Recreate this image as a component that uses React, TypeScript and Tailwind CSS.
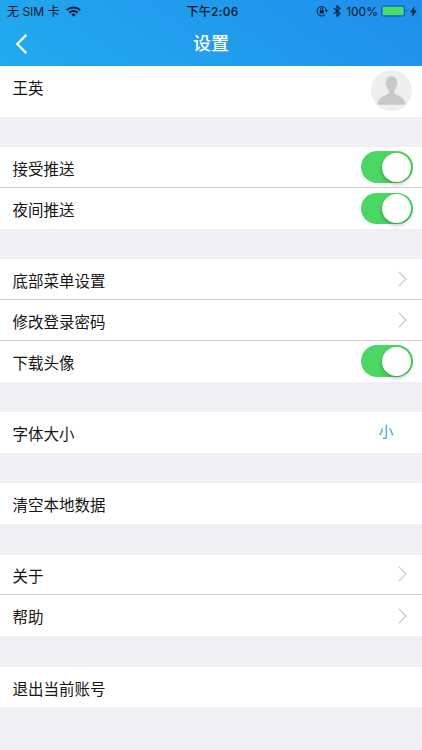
type Item = {
  label: string
  kind: "switch" | "link" | "value" | "plain"
  value?: string
}

const groups: Item[][] = [
  [
    { label: "接受推送", kind: "switch" },
    { label: "夜间推送", kind: "switch" },
  ],
  [
    { label: "底部菜单设置", kind: "link" },
    { label: "修改登录密码", kind: "link" },
    { label: "下载头像", kind: "switch" },
  ],
  [{ label: "字体大小", kind: "value", value: "小" }],
  [{ label: "清空本地数据", kind: "plain" }],
  [
    { label: "关于", kind: "link" },
    { label: "帮助", kind: "link" },
  ],
  [{ label: "退出当前账号", kind: "plain" }],
]

function StatusBar() {
  return (
    <div className="flex h-[22px] items-center justify-between pl-[7px] pr-[5px] text-[12px] leading-[22px] text-[#06182c]">
      <div className="flex w-[140px] items-center gap-[6px]">
        <span className="whitespace-nowrap pt-px">无 SIM 卡</span>
        <svg width="15" height="11" viewBox="0 0 15 11" fill="none" stroke="currentColor" strokeWidth="2">
          <path d="M0.8 4.1a9.6 9.6 0 0 1 13.4 0" />
          <path d="M3.3 6.7a6 6 0 0 1 8.4 0" />
          <path d="M7.5 10.8 5.3 8.6a3.1 3.1 0 0 1 4.4 0z" fill="currentColor" stroke="none" />
        </svg>
      </div>
      <span className="pl-[1px] pt-px font-medium tracking-[0.3px]">下午2:06</span>
      <div className="flex w-[140px] items-center justify-end">
        {/* Rotation lock */}
        <svg className="mr-[5px]" width="12" height="12" viewBox="0 0 12 12" fill="none" stroke="currentColor">
          <path d="M9.2 9.5A4.7 4.7 0 1 1 10.4 5.6" strokeWidth="1" />
          <path d="M8.7 5.3h3.3l-1.6 2.2z" fill="currentColor" stroke="none" />
          <rect x="3.7" y="5.3" width="4" height="3.2" fill="currentColor" stroke="none" />
          <path d="M4.5 5.4V4.3a1.2 1.2 0 0 1 2.4 0v1.1" strokeWidth="0.9" />
        </svg>
        {/* Bluetooth */}
        <svg className="mr-[5px]" width="8" height="12" viewBox="0 0 8 12" fill="none" stroke="currentColor" strokeWidth="1.1">
          <path d="M0.8 3.2 7 8.6 4 11.2V0.8L7 3.4 0.8 8.8" />
        </svg>
        <span className="pt-px">100%</span>
        <svg className="ml-[3px]" width="27" height="12" viewBox="0 0 27 12">
          <rect x="0.6" y="0.9" width="23" height="10.2" rx="2" fill="none" stroke="#11629f" strokeWidth="1" />
          <rect x="1.8" y="2.1" width="20.6" height="7.8" rx="0.8" fill="#4cdb63" />
          <path d="M25 4.4c1.2.5 1.2 2.7 0 3.2z" fill="#11629f" />
        </svg>
        <svg className="ml-[2px]" width="7" height="11" viewBox="0 0 7 11">
          <path d="M4.7 0 0.3 6.2h2.5L2 11l4.7-6.5H4z" fill="currentColor" />
        </svg>
      </div>
    </div>
  )
}

function Switch() {
  return (
    <div className="flex h-[31.5px] w-[52px] items-center justify-end rounded-full bg-[#4bd763] pr-[1.5px]">
      <div className="size-[29px] rounded-full bg-white shadow-[0_2px_4px_rgba(0,0,0,0.28)]" />
    </div>
  )
}

function Chevron() {
  return (
    <svg className="mr-[5.5px]" width="9" height="16" viewBox="0 0 9 16" fill="none" stroke="#c7c7cc" strokeWidth="1.2">
      <path d="M0.9 0.8 8 8 0.9 15.2" />
    </svg>
  )
}

function Row({ item, divided }: { item: Item; divided: boolean }) {
  return (
    <div
      className={`flex h-[40.75px] items-center justify-between bg-white pl-[12.5px] pr-[9.5px] ${
        divided ? "border-b border-[#d0d0d3]" : ""
      }`}
    >
      <span className="pt-[5.5px]">{item.label}</span>
      {item.kind === "switch" && <Switch />}
      {item.kind === "link" && <Chevron />}
      {item.kind === "value" && <span className="mr-[19px] text-[15px] text-[#35a9d6]">{item.value}</span>}
    </div>
  )
}

export default function App() {
  return (
    <div className="h-[750px] w-[422px] overflow-hidden bg-[#eeeef3] font-['Inter','Noto_Sans_CJK_SC',sans-serif] text-[15.5px] leading-[24px] text-[#161616]">
      <header className="h-[65.5px] bg-[linear-gradient(35deg,#21abef,#2199ec_60%,#218eec)]">
        <StatusBar />
        <div className="grid h-[43px] grid-cols-3 items-center">
          <svg className="ml-[15px]" width="13" height="20" viewBox="0 0 13 20" fill="none" stroke="#fff" strokeWidth="2.2">
            <path d="M11.4 0.9 2.2 10l9.2 9.1" />
          </svg>
          <h1 className="text-center text-[18px] font-medium text-white">设置</h1>
        </div>
      </header>

      <div className="flex h-[51.25px] items-center justify-between bg-white pl-[12.5px] pr-[10.5px]">
        <span className="pb-[5px]">王英</span>
        <svg className="mb-px" width="41" height="41" viewBox="0 0 41 41">
          <circle cx="20.5" cy="20.5" r="20.5" fill="#eeeeee" />
          <path
            d="M20.5 6.2c-4 0-5.8 2.5-5.5 6.4-.8.7-.3 3.4.8 3.8.3 1.8 1 3 1.9 3.8v3.3c-1 2.1-10.9 2.2-11.2 11.3h28c-.3-9.1-10.2-9.2-11.2-11.3v-3.3c.9-.8 1.6-2 1.9-3.8 1.1-.4 1.6-3.1.8-3.8.3-3.9-1.5-6.4-5.5-6.4z"
            fill="#c8c8c8"
          />
        </svg>
      </div>

      {groups.map((group) => (
        <section key={group[0].label} className="pt-[30.5px]">
          {group.map((item, i) => (
            <Row key={item.label} item={item} divided={i < group.length - 1} />
          ))}
        </section>
      ))}
    </div>
  )
}
